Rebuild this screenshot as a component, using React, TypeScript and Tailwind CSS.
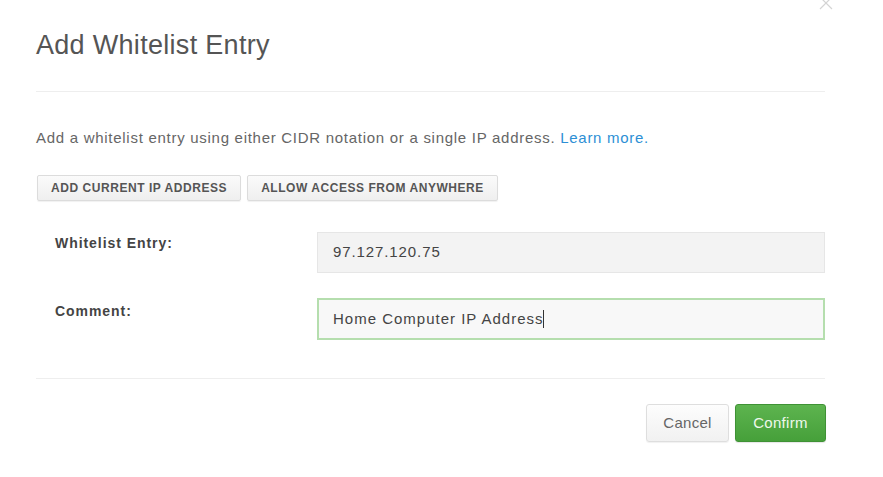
export default function App() {
  return (
    <div
      className="relative h-[477px] w-[883px] overflow-hidden bg-white pl-[36px] pr-[58px]"
      style={{ fontFamily: '"Liberation Sans", Arial, sans-serif' }}
    >
      {/* close button, mostly cut off at the top */}
      <button className="absolute left-[818px] top-[-5px] text-[#d4d4d4]">
        <svg width="16" height="16" viewBox="0 0 16 16" fill="none" stroke="currentColor" strokeWidth="1.2">
          <path d="M2 2l12 12M14 2L2 14" />
        </svg>
      </button>

      <div className="border-b border-[#eeeeee] pb-[30px] pt-[29px]">
        <h1 className="text-[27px] font-light leading-[32px] tracking-[0.3px] text-[#555]">Add Whitelist Entry</h1>
      </div>

      <p className="mt-[36px] text-[15px] leading-[20px] tracking-[0.72px] text-[#666]">
        Add a whitelist entry using either CIDR notation or a single IP address.{" "}
        <a className="text-[#2d8fd5]">Learn more.</a>
      </p>

      <div className="mt-[27px] flex gap-[6px] pl-px">
        <button className="h-[26px] rounded-[2px] border border-[#dcdcdc] bg-gradient-to-b from-[#fbfbfb] to-[#efefef] px-[13px] text-[12px] font-bold tracking-[0.55px] text-[#555] shadow-[0_1px_1px_rgba(0,0,0,0.06)]">
          ADD CURRENT IP ADDRESS
        </button>
        <button className="h-[26px] rounded-[2px] border border-[#dcdcdc] bg-gradient-to-b from-[#fbfbfb] to-[#efefef] px-[13px] text-[12px] font-bold tracking-[0.55px] text-[#555] shadow-[0_1px_1px_rgba(0,0,0,0.06)]">
          ALLOW ACCESS FROM ANYWHERE
        </button>
      </div>

      <div className="mt-[31px] grid grid-cols-[281px_1fr] gap-y-[25px]">
        <label className="pl-[19px] pt-[1px] text-[14px] font-bold leading-[20px] tracking-[0.95px] text-[#444]">
          Whitelist Entry:
        </label>
        <div className="flex h-[41px] items-center border border-[#e6e6e6] bg-[#f3f3f3] px-[15px] text-[15px] tracking-[0.9px] text-[#444]">
          97.127.120.75
        </div>
        <label className="pl-[19px] pt-[3px] text-[14px] font-bold leading-[20px] tracking-[0.95px] text-[#444]">
          Comment:
        </label>
        <div className="flex h-[42px] items-center border-2 border-[#b5deae] bg-[#f8f8f8] px-[14px] text-[15px] tracking-[1px] text-[#444]">
          Home Computer IP Address
          <span className="inline-block h-[18px] w-px bg-[#333]" />
        </div>
      </div>

      <div className="mt-[38px] border-t border-[#eeeeee]" />

      <div className="mt-[25px] flex justify-end gap-[6px]">
        <button className="h-[38px] w-[83px] rounded-[3px] border border-[#dedede] bg-gradient-to-b from-[#fdfdfd] to-[#f1f1f1] text-[15px] tracking-[0.3px] text-[#666] shadow-[0_1px_1px_rgba(0,0,0,0.06)]">
          Cancel
        </button>
        <button className="-mr-px h-[38px] w-[91px] rounded-[3px] border border-[#3f9235] bg-gradient-to-b from-[#5db44f] to-[#46a03a] text-[15px] tracking-[0.3px] text-[#eef8ec] shadow-[0_1px_1px_rgba(0,0,0,0.1)]">
          Confirm
        </button>
      </div>
    </div>
  )
}
